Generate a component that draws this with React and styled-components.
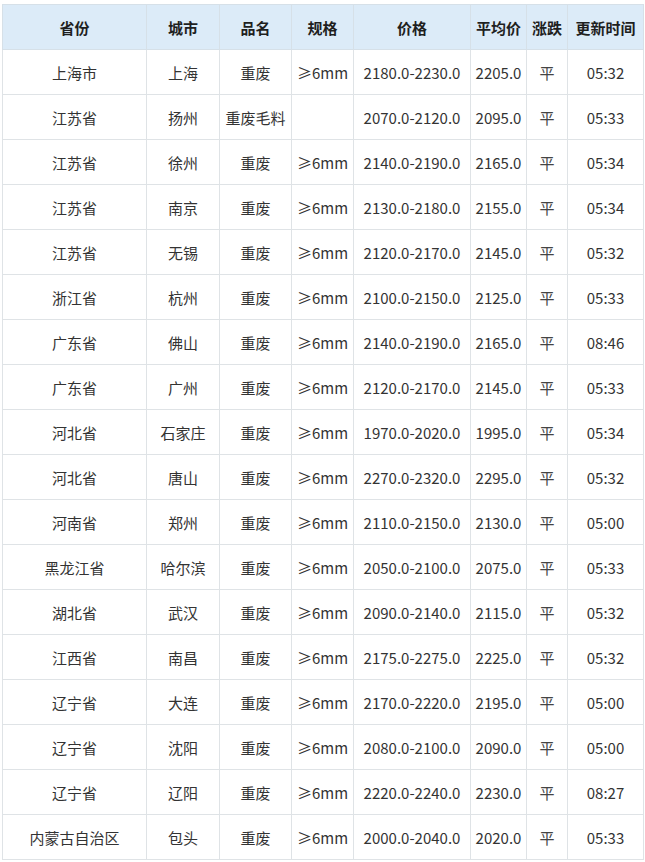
import React from 'react';
import styled, { createGlobalStyle } from 'styled-components';

const GlobalStyle = createGlobalStyle`
  html, body {
    margin: 0;
    padding: 0;
    background: #fff;
  }
  body {
    font-family: "Noto Sans CJK SC", "Noto Sans", sans-serif;
  }
`;

const Page = styled.div`
  padding: 4px 2px 0 2px;
  overflow: hidden;
`;

const Table = styled.table`
  border-collapse: collapse;
  table-layout: fixed;
  width: 641px;
  color: #333;
  font-size: 15px;
`;

const HeadCell = styled.th`
  height: 44px;
  padding: 0;
  background: #dcebf8;
  border: 1px solid #d6e0e8;
  font-weight: 700;
  color: #1f1f1f;
  text-align: center;
  white-space: nowrap;
`;

const Cell = styled.td`
  height: 44px;
  padding: 0;
  border: 1px solid #dfe3e6;
  text-align: center;
  white-space: nowrap;
  color: ${(p) => (p.$muted ? '#444' : '#333')};
`;

const columns = [
  { title: '省份', width: 144 },
  { title: '城市', width: 73 },
  { title: '品名', width: 72 },
  { title: '规格', width: 62 },
  { title: '价格', width: 117 },
  { title: '平均价', width: 56 },
  { title: '涨跌', width: 41 },
  { title: '更新时间', width: 76 },
];

const rows = [
  ['上海市', '上海', '重废', '≥6mm', '2180.0-2230.0', '2205.0', '平', '05:32'],
  ['江苏省', '扬州', '重废毛料', '', '2070.0-2120.0', '2095.0', '平', '05:33'],
  ['江苏省', '徐州', '重废', '≥6mm', '2140.0-2190.0', '2165.0', '平', '05:34'],
  ['江苏省', '南京', '重废', '≥6mm', '2130.0-2180.0', '2155.0', '平', '05:34'],
  ['江苏省', '无锡', '重废', '≥6mm', '2120.0-2170.0', '2145.0', '平', '05:32'],
  ['浙江省', '杭州', '重废', '≥6mm', '2100.0-2150.0', '2125.0', '平', '05:33'],
  ['广东省', '佛山', '重废', '≥6mm', '2140.0-2190.0', '2165.0', '平', '08:46'],
  ['广东省', '广州', '重废', '≥6mm', '2120.0-2170.0', '2145.0', '平', '05:33'],
  ['河北省', '石家庄', '重废', '≥6mm', '1970.0-2020.0', '1995.0', '平', '05:34'],
  ['河北省', '唐山', '重废', '≥6mm', '2270.0-2320.0', '2295.0', '平', '05:32'],
  ['河南省', '郑州', '重废', '≥6mm', '2110.0-2150.0', '2130.0', '平', '05:00'],
  ['黑龙江省', '哈尔滨', '重废', '≥6mm', '2050.0-2100.0', '2075.0', '平', '05:33'],
  ['湖北省', '武汉', '重废', '≥6mm', '2090.0-2140.0', '2115.0', '平', '05:32'],
  ['江西省', '南昌', '重废', '≥6mm', '2175.0-2275.0', '2225.0', '平', '05:32'],
  ['辽宁省', '大连', '重废', '≥6mm', '2170.0-2220.0', '2195.0', '平', '05:00'],
  ['辽宁省', '沈阳', '重废', '≥6mm', '2080.0-2100.0', '2090.0', '平', '05:00'],
  ['辽宁省', '辽阳', '重废', '≥6mm', '2220.0-2240.0', '2230.0', '平', '08:27'],
  ['内蒙古自治区', '包头', '重废', '≥6mm', '2000.0-2040.0', '2020.0', '平', '05:33'],
];

export default function App() {
  return (
    <Page>
      <GlobalStyle />
      <Table>
        <colgroup>
          {columns.map((c) => (
            <col key={c.title} style={{ width: c.width }} />
          ))}
        </colgroup>
        <thead>
          <tr>
            {columns.map((c) => (
              <HeadCell key={c.title}>{c.title}</HeadCell>
            ))}
          </tr>
        </thead>
        <tbody>
          {rows.map((r, i) => (
            <tr key={i}>
              {r.map((v, j) => (
                <Cell key={j} $muted={j === 6}>{v}</Cell>
              ))}
            </tr>
          ))}
        </tbody>
      </Table>
    </Page>
  );
}
